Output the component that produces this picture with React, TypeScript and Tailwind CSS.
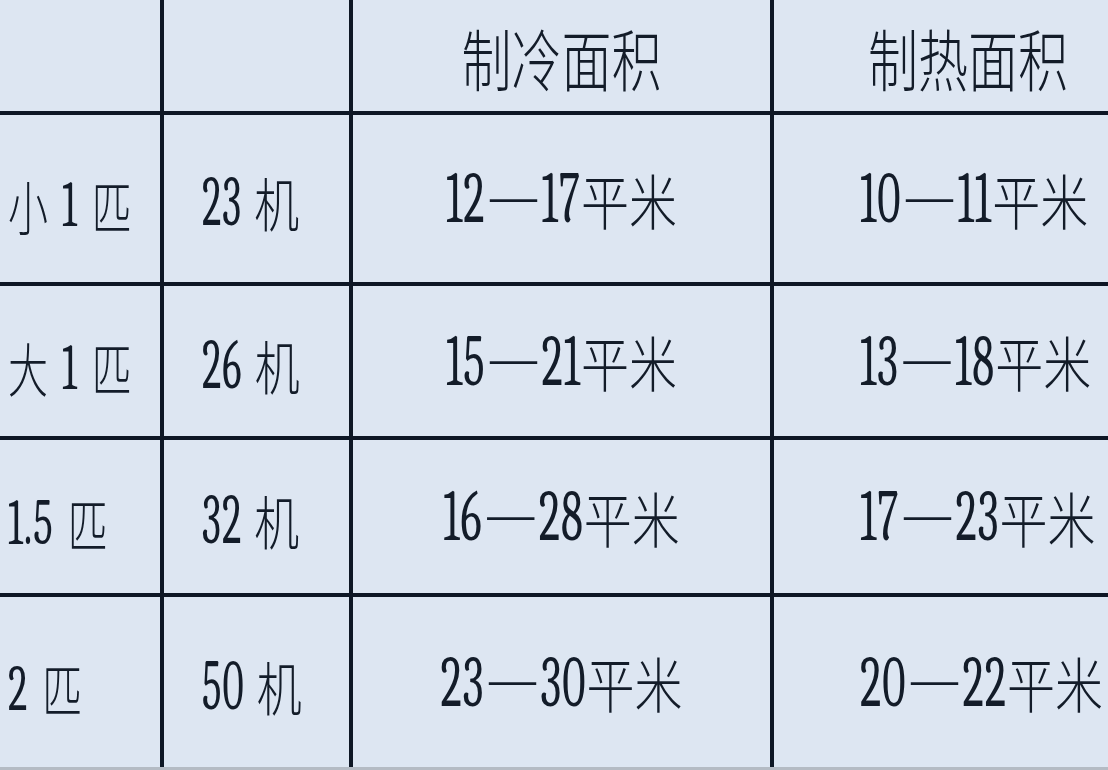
import React from "react";

type Variant = {
  cjk: string;
  dig: string;
  dash: string;
  space: string;
};

const LEFT: Variant = {
  cjk: "inline-block font-['Noto_Sans_CJK_SC',sans-serif] font-light text-[40px] leading-none scale-y-[1.45]",
  dig: "inline-block font-serif font-normal text-[41px] leading-none tracking-[1px] scale-y-[1.6]",
  dash: "",
  space: "inline-block w-[14px]",
};

const MID: Variant = {
  cjk: "inline-block font-['Noto_Sans_CJK_SC',sans-serif] font-light text-[45px] leading-none scale-y-[1.3]",
  dig: "inline-block font-serif font-normal text-[41px] leading-none tracking-[1px] scale-y-[1.72]",
  dash: "",
  space: "inline-block w-[12px]",
};

const AREA: Variant = {
  cjk: "inline-block font-['Noto_Sans_CJK_SC',sans-serif] font-light text-[48px] leading-none scale-y-[1.25]",
  dig: "inline-block font-serif font-normal text-[45px] leading-none tracking-[1px] scale-y-[1.62]",
  dash: "inline-block font-serif font-normal text-[52px] leading-none mx-[2px] -translate-y-[2px]",
  space: "inline-block w-[12px]",
};

const HEAD: Variant = {
  cjk: "inline-block font-['Noto_Sans_CJK_SC',sans-serif] font-light text-[50px] leading-none scale-y-[1.35]",
  dig: "",
  dash: "",
  space: "",
};

function Txt({ text, v }: { text: string; v: Variant }) {
  const parts = text.match(/[0-9.]+|—|\s+|[^0-9.\s—]+/g) || [];
  return (
    <span className="flex items-center text-[#131c29]">
      {parts.map((p, i) => {
        if (/^[0-9.]+$/.test(p)) return <span key={i} className={v.dig}>{p}</span>;
        if (p === "—") return <span key={i} className={v.dash}>—</span>;
        if (/^\s+$/.test(p)) return <span key={i} className={v.space} />;
        return <span key={i} className={v.cjk}>{p}</span>;
      })}
    </span>
  );
}

const rows = [
  { a: "小 1 匹", b: "23 机", c: "12—17平米", d: "10—11平米" },
  { a: "大 1 匹", b: "26 机", c: "15—21平米", d: "13—18平米" },
  { a: "1.5 匹", b: "32 机", c: "16—28平米", d: "17—23平米" },
  { a: "2 匹", b: "50 机", c: "23—30平米", d: "20—22平米" },
];

export default function App() {
  const cell = "bg-[#dde6f2] flex items-center";
  return (
    <div className="w-[1108px] h-[770px] overflow-hidden bg-[#b4bbc4] flex flex-col">
      <div className="grid grid-cols-[160px_185px_417px_1fr] gap-x-[4px] gap-y-[4px] bg-[#0e1725] h-[767px] grid-rows-[111px_167px_150px_153px_170px]">
        <div className={cell} />
        <div className={cell} />
        <div className={`${cell} justify-center`}>
          <Txt text="制冷面积" v={HEAD} />
        </div>
        <div className={`${cell} pl-[94px]`}>
          <Txt text="制热面积" v={HEAD} />
        </div>
        {rows.map((r, i) => (
          <React.Fragment key={i}>
            <div className={`${cell} pl-[8px] pt-[12px]`}>
              <Txt text={r.a} v={LEFT} />
            </div>
            <div className={`${cell} pl-[38px] pt-[6px]`}>
              <Txt text={r.b} v={MID} />
            </div>
            <div className={`${cell} justify-center`}>
              <Txt text={r.c} v={AREA} />
            </div>
            <div className={`${cell} pl-[86px]`}>
              <Txt text={r.d} v={AREA} />
            </div>
          </React.Fragment>
        ))}
      </div>
    </div>
  );
}
